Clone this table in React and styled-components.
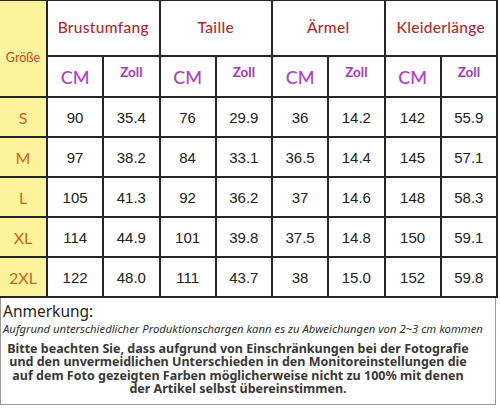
import React from 'react';
import styled, {createGlobalStyle} from 'styled-components';

const GlobalStyle = createGlobalStyle`
  html, body {
    margin: 0;
    padding: 0;
    background: #ffffff;
  }
`;

const Page = styled.div`
  width: 500px;
  height: 408px;
  overflow: hidden;
  background: #fff;
`;

const Grid = styled.div`
  display: grid;
  width: 496px;
  grid-template-columns: 46px repeat(8, 1fr);
  grid-template-rows: 54px 39px repeat(5, 38px);
  gap: 2px;
  padding: 1px 2px 2px 0;
  background: #262626;
`;

const Cell = styled.div`
  display: flex;
  align-items: center;
  justify-content: center;
  background: ${(p) => (p.$yellow ? '#fbf49c' : '#ffffff')};
  grid-column: span ${(p) => p.$span || 1};
  grid-row: span ${(p) => p.$rows || 1};
`;

const GroupTitle = styled.span`
  font-family: Lato, 'Liberation Sans', sans-serif;
  font-size: 15.5px;
  font-weight: 500;
  color: #b3292c;
  letter-spacing: 0.3px;
  margin-top: -2px;
`;

const SizeHead = styled.span`
  font-family: Lato, 'Liberation Sans', sans-serif;
  font-size: 12.5px;
  color: #c4481a;
  margin-top: 17px;
`;

const Unit = styled.span`
  font-family: Lato, 'Liberation Sans', sans-serif;
  font-size: ${(p) => (p.$small ? '13.5px' : '18px')};
  font-weight: ${(p) => (p.$small ? 700 : 500)};
  color: ${(p) => (p.$small ? '#a733c4' : '#b23ec9')};
  margin-top: ${(p) => (p.$small ? '-9px' : '0')};
`;

const SizeLabel = styled.span`
  font-family: Lato, 'Liberation Sans', sans-serif;
  font-size: 16px;
  color: #d0621c;
`;

const Value = styled.span`
  font-family: 'Liberation Sans', Arial, sans-serif;
  font-size: 15px;
  color: #222;
`;

const Note = styled.div`
  width: 496px;
  height: 107px;
  border: 1px solid #9a9a9a;
  border-top: none;
  box-sizing: border-box;
  padding: 4px 2px 0;
  font-family: 'Noto Sans', 'Open Sans', sans-serif;
  color: #262626;
`;

const NoteTitle = styled.div`
  font-size: 15.5px;
  line-height: 18px;
`;

const NoteLine = styled.div`
  font-size: 11.3px;
  font-style: italic;
  line-height: 17px;
  color: #303030;
  white-space: nowrap;
`;

const NoteBody = styled.div`
  width: 470px;
  margin-top: 5px;
  font-size: 12.5px;
  font-weight: 700;
  text-align: center;
  color: #383838;
`;

const BodyLine = styled.div`
  height: 13.4px;
  line-height: 13.4px;
  white-space: nowrap;
`;

const rows = [
  ['S', '90', '35.4', '76', '29.9', '36', '14.2', '142', '55.9'],
  ['M', '97', '38.2', '84', '33.1', '36.5', '14.4', '145', '57.1'],
  ['L', '105', '41.3', '92', '36.2', '37', '14.6', '148', '58.3'],
  ['XL', '114', '44.9', '101', '39.8', '37.5', '14.8', '150', '59.1'],
  ['2XL', '122', '48.0', '111', '43.7', '38', '15.0', '152', '59.8'],
];

const groups = ['Brustumfang', 'Taille', 'Ärmel', 'Kleiderlänge'];

const bodyLines = [
  'Bitte beachten Sie, dass aufgrund von Einschränkungen bei der Fotografie',
  'und den unvermeidlichen Unterschieden in den Monitoreinstellungen die',
  'auf dem Foto gezeigten Farben möglicherweise nicht zu 100% mit denen',
  'der Artikel selbst übereinstimmen.',
];

const App = () => (
  <Page>
    <GlobalStyle />
    <Grid>
      <Cell $yellow $rows={2}>
        <SizeHead>Größe</SizeHead>
      </Cell>
      {groups.map((g) => (
        <Cell key={g} $span={2}>
          <GroupTitle>{g}</GroupTitle>
        </Cell>
      ))}
      {groups.map((g) => (
        <React.Fragment key={g + '-u'}>
          <Cell><Unit>CM</Unit></Cell>
          <Cell><Unit $small>Zoll</Unit></Cell>
        </React.Fragment>
      ))}
      {rows.map(([size, ...vals]) => (
        <React.Fragment key={size}>
          <Cell $yellow><SizeLabel>{size}</SizeLabel></Cell>
          {vals.map((v, i) => (
            <Cell key={i}><Value>{v}</Value></Cell>
          ))}
        </React.Fragment>
      ))}
    </Grid>
    <Note>
      <NoteTitle>Anmerkung:</NoteTitle>
      <NoteLine>
        Aufgrund unterschiedlicher Produktionschargen kann es zu Abweichungen von 2~3 cm kommen
      </NoteLine>
      <NoteBody>
        {bodyLines.map((l) => (
          <BodyLine key={l}>{l}</BodyLine>
        ))}
      </NoteBody>
    </Note>
  </Page>
);

export default App;
